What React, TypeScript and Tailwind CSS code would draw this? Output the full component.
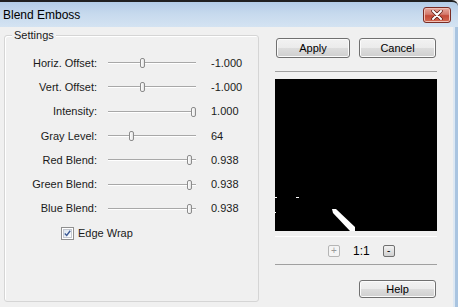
import React from "react";

const rows = [
  { label: "Horiz. Offset:", pos: 34, value: "-1.000" },
  { label: "Vert. Offset:", pos: 34, value: "-1.000" },
  { label: "Intensity:", pos: 85, value: "1.000" },
  { label: "Gray Level:", pos: 23, value: "64" },
  { label: "Red Blend:", pos: 81, value: "0.938" },
  { label: "Green Blend:", pos: 81, value: "0.938" },
  { label: "Blue Blend:", pos: 81, value: "0.938" },
];

const btn =
  "h-full rounded-[3px] border border-[#707070] bg-[linear-gradient(to_bottom,#f2f2f2_0%,#ebebeb_50%,#dddddd_50%,#cfcfcf_100%)] shadow-[inset_0_0_0_1px_#fbfbfb] flex items-center justify-center text-[11px] text-black";

function Slider({ pos }: { pos: number }) {
  return (
    <div className="relative w-[88px] h-full flex items-center">
      <div className="w-full h-[2px] bg-[#a8a8a8] border-b border-white" />
      <div
        className="absolute top-1/2 -translate-y-1/2 w-[5px] h-[10px] rounded-[2px] border border-[#8c8c8c] bg-[linear-gradient(to_right,#ffffff,#e3e3e3)]"
        style={{ left: pos - 2 }}
      />
    </div>
  );
}

function Row({ label, pos, value }: { label: string; pos: number; value: string }) {
  return (
    <div className="h-[24.3px] flex items-center">
      <div className="w-[92px] text-right">{label}</div>
      <div className="ml-[11px] h-full">
        <Slider pos={pos} />
      </div>
      <div className="ml-[15px]">{value}</div>
    </div>
  );
}

export default function App() {
  return (
    <div className="w-[458px] h-[307px] overflow-hidden flex flex-col bg-[#f0f0f0] text-[11px] text-[#1a1a1a] font-['Liberation_Sans',Arial,sans-serif] leading-none">
      {/* title bar */}
      <div className="h-[27px] shrink-0 border-t-2 border-[#202020] rounded-tr-[6px] bg-[linear-gradient(to_bottom,#b3cce6,#c6d9ed_45%,#d4e3f2)] flex items-center pl-[3px] pr-[7px]">
        <span className="text-[12px] text-black">Blend Emboss</span>
        <div className="ml-auto w-[28px] h-[16px] rounded-[3px] border border-[#7a2c24] bg-[linear-gradient(to_bottom,#e8a99e,#d47a6c_45%,#c44a38_55%,#d36a52)] shadow-[inset_0_0_0_1px_#f0c0b5] flex items-center justify-center">
          <svg width="12" height="10" viewBox="0 0 12 10">
            <path d="M2 1 L10 9 M10 1 L2 9" stroke="#5a1a12" strokeWidth="3.4" strokeLinecap="round" />
            <path d="M2 1 L10 9 M10 1 L2 9" stroke="#ffffff" strokeWidth="2" strokeLinecap="round" />
          </svg>
        </div>
      </div>

      <div className="flex-1 flex">
        {/* settings group */}
        <div className="relative ml-[4px] mt-[8px] w-[255px] h-[267px] border border-[#d5d5d5] rounded-[3px] shadow-[inset_1px_1px_0_#ffffff]">
          <span className="absolute left-[7px] -top-[8px] px-[2px] bg-[#f0f0f0] leading-[14px]">Settings</span>
          <div className="pt-[15px] flex flex-col">
            {rows.map((r) => (
              <Row key={r.label} {...r} />
            ))}
            <div className="h-[24.3px] flex items-center pl-[56px] gap-[4px]">
              <div className="w-[13px] h-[13px] border border-[#8f8f8f] bg-white p-[1px]">
                <div className="w-full h-full border border-[#c4c8d0] bg-[linear-gradient(135deg,#d9e3ee,#ffffff)] flex items-center justify-center">
                  <svg width="9" height="9" viewBox="0 0 9 9">
                    <path d="M1 4.5 L3.5 7 L8 1" fill="none" stroke="#3c5a95" strokeWidth="1.8" />
                  </svg>
                </div>
              </div>
              <span>Edge Wrap</span>
            </div>
          </div>
        </div>

        {/* right column */}
        <div className="ml-[16px] w-[162px] flex flex-col">
          <div className="mt-[11px] h-[20px] flex">
            <div className={`${btn} ml-[1px] w-[74px] border-[#3c7fb1] shadow-[inset_0_0_0_1px_#9fd6f4,inset_0_0_0_2px_#dcf1fc]`}>Apply</div>
            <div className={`${btn} ml-auto mr-[1px] w-[77px]`}>Cancel</div>
          </div>
          <div className="mt-[13px] h-px bg-[#a0a0a0]" />
          <div className="mt-[7px] h-[152px] w-[162px] bg-black">
            <svg width="162" height="152" viewBox="0 0 162 152">
              <rect x="0" y="118" width="2" height="1" fill="#fff" />
              <rect x="21" y="118" width="3" height="1" fill="#fff" />
              <rect x="0" y="133" width="1" height="1" fill="#fff" />
              <path d="M57 130 L61 130 L80 148 L80 152 L75 152 L58 134 Z" fill="#fff" />
            </svg>
          </div>
          <div className="mt-[5px] h-px bg-white" />
          <div className="mt-[8px] h-[12px] flex items-center ml-[53px]">
            <div className="w-[12px] h-[12px] border border-[#b5b5b5] rounded-[2px] bg-[#f4f4f4] flex items-center justify-center text-[10px] text-[#9a9a9a]">+</div>
            <span className="ml-[13px] text-[12px] text-black">1:1</span>
            <div className="ml-[13px] w-[12px] h-[12px] border border-[#707070] rounded-[2px] bg-[linear-gradient(to_bottom,#f2f2f2,#d0d0d0)] flex items-center justify-center text-[10px] text-black">-</div>
          </div>
          <div className="mt-[7px] h-px bg-[#a0a0a0]" />
          <div className="mt-[15px] h-[18px] flex justify-end">
            <div className={`${btn} mr-[1px] w-[77px]`}>Help</div>
          </div>
        </div>

        {/* window frame edge */}
        <div className="ml-auto w-[5px] border-l-2 border-[#dde8f3] bg-[#a9c4e0]" />
      </div>
    </div>
  );
}
